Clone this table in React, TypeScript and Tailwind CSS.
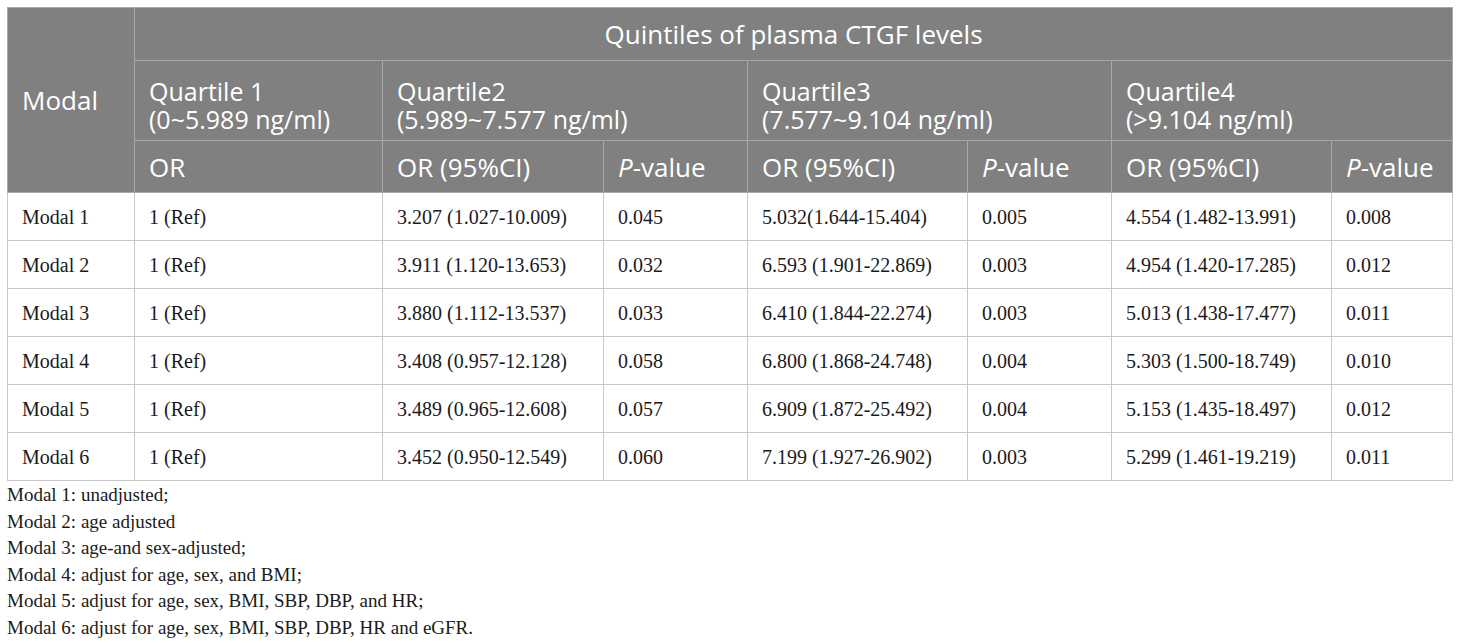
const rows = [
    ['Modal 1', '1 (Ref)', '3.207 (1.027-10.009)', '0.045', '5.032(1.644-15.404)', '0.005', '4.554 (1.482-13.991)', '0.008'],
    ['Modal 2', '1 (Ref)', '3.911 (1.120-13.653)', '0.032', '6.593 (1.901-22.869)', '0.003', '4.954 (1.420-17.285)', '0.012'],
    ['Modal 3', '1 (Ref)', '3.880 (1.112-13.537)', '0.033', '6.410 (1.844-22.274)', '0.003', '5.013 (1.438-17.477)', '0.011'],
    ['Modal 4', '1 (Ref)', '3.408 (0.957-12.128)', '0.058', '6.800 (1.868-24.748)', '0.004', '5.303 (1.500-18.749)', '0.010'],
    ['Modal 5', '1 (Ref)', '3.489 (0.965-12.608)', '0.057', '6.909 (1.872-25.492)', '0.004', '5.153 (1.435-18.497)', '0.012'],
    ['Modal 6', '1 (Ref)', '3.452 (0.950-12.549)', '0.060', '7.199 (1.927-26.902)', '0.003', '5.299 (1.461-19.219)', '0.011'],
]

const notes = [
    'Modal 1: unadjusted;',
    'Modal 2: age adjusted',
    'Modal 3: age-and sex-adjusted;',
    'Modal 4: adjust for age, sex, and BMI;',
    'Modal 5: adjust for age, sex, BMI, SBP, DBP, and HR;',
    'Modal 6: adjust for age, sex, BMI, SBP, DBP, HR and eGFR.',
]

const widths = [127, 248, 221, 144, 220, 144, 220, 121]

const th = 'border border-[#a8a8a8] px-[14px] align-middle font-normal'
const th2 = 'border border-[#a8a8a8] px-[14px] pt-[8px] align-middle font-normal'

const PValue = () => (
    <>
        <i>P</i>-value
    </>
)

export default function App() {
    return (
        <div className="min-h-[643px] w-[1460px] bg-white pt-[7px] pl-[7px]">
            <table className="w-[1446px] table-fixed border-collapse">
                <colgroup>
                    {widths.map((w, i) => (
                        <col key={i} style={{ width: w }} />
                    ))}
                </colgroup>
                {/* Header */}
                <thead className="bg-[#808080] text-white text-[26px] leading-[30px] font-['Open_Sans',sans-serif]">
                    <tr className="h-[53px]">
                        <th rowSpan={3} className={`${th} text-left`}>Modal</th>
                        <th colSpan={7} className={`${th} text-center`}>Quintiles of plasma CTGF levels</th>
                    </tr>
                    <tr className="h-[80px] text-[25px] leading-[28px] text-left">
                        <th className={th2}>Quartile 1<br />(0~5.989 ng/ml)</th>
                        <th colSpan={2} className={th2}>Quartile2<br />(5.989~7.577 ng/ml)</th>
                        <th colSpan={2} className={th2}>Quartile3<br />(7.577~9.104 ng/ml)</th>
                        <th colSpan={2} className={th2}>Quartile4<br />(&gt;9.104 ng/ml)</th>
                    </tr>
                    <tr className="h-[52px] text-left">
                        <th className={th}>OR</th>
                        <th className={th}>OR (95%CI)</th>
                        <th className={th}><PValue /></th>
                        <th className={th}>OR (95%CI)</th>
                        <th className={th}><PValue /></th>
                        <th className={th}>OR (95%CI)</th>
                        <th className={th}><PValue /></th>
                    </tr>
                </thead>
                {/* Body */}
                <tbody className="text-[20px] text-[#1a1a1a] font-['Liberation_Serif',serif]">
                    {rows.map((r, i) => (
                        <tr key={i} className="h-[48px]">
                            {r.map((c, j) => (
                                <td key={j} className="border border-[#c8c8c8] px-[14px] align-middle">{c}</td>
                            ))}
                        </tr>
                    ))}
                </tbody>
            </table>

            {/* Footnotes */}
            <div className="pt-[1px] text-[19px] leading-[26.5px] text-[#1a1a1a] font-['Liberation_Serif',serif]">
                {notes.map((n, i) => (
                    <div key={i}>{n}</div>
                ))}
            </div>
        </div>
    )
}
